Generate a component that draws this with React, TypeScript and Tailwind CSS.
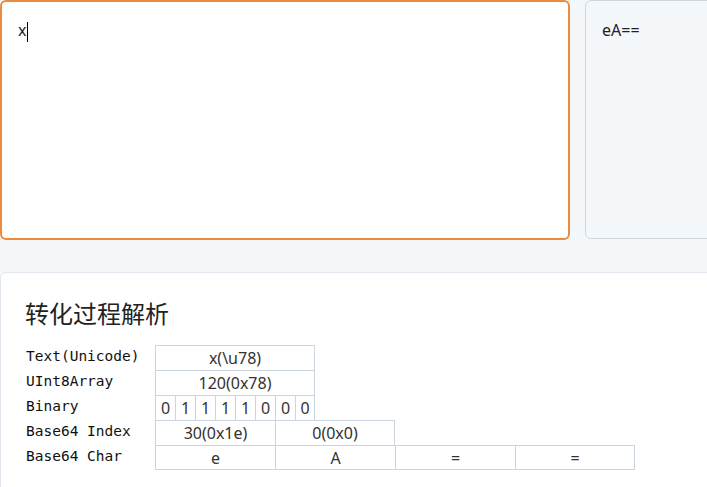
const rows: { label: string; cells: { text: string; w: number }[] }[] = [
  { label: "Text(Unicode)", cells: [{ text: "x(\\u78)", w: 160 }] },
  { label: "UInt8Array", cells: [{ text: "120(0x78)", w: 160 }] },
  {
    label: "Binary",
    cells: ["0", "1", "1", "1", "1", "0", "0", "0"].map((b) => ({ text: b, w: 20 })),
  },
  {
    label: "Base64 Index",
    cells: [
      { text: "30(0x1e)", w: 120 },
      { text: "0(0x0)", w: 120 },
    ],
  },
  {
    label: "Base64 Char",
    cells: [
      { text: "e", w: 120 },
      { text: "A", w: 120 },
      { text: "=", w: 120 },
      { text: "=", w: 120 },
    ],
  },
];

const sans = { fontFamily: '"Noto Sans", "Noto Sans CJK SC", sans-serif' };

const App = () => {
  return (
    <div className="h-[487px] w-[707px] overflow-hidden bg-[#f5f8fb]" style={sans}>
      <div className="flex h-[240px] gap-[15px]">
        <div className="h-[240px] w-[570px] shrink-0 rounded-md border-2 border-[#ee8a3b] bg-white px-4 pt-[18px] text-[16px] leading-5 text-[#1f2328]">
          <span>x</span>
          <span className="ml-px inline-block h-[20px] w-px bg-black align-middle" />
        </div>
        <div className="h-[239px] w-[570px] shrink-0 rounded-md border border-[#cfd7e1] bg-[#f5f8fb] px-4 pt-[19px] text-[16px] leading-5 text-[#1f2328]">
          eA==
        </div>
      </div>

      <div className="mt-[32px] w-[760px] rounded-md border border-[#e1e7ee] bg-white px-6 pt-6 pb-8">
        <h2
          className="text-[24px] leading-8 text-[#222]"
          style={{ fontFamily: '"Noto Sans CJK SC", sans-serif' }}
        >
          转化过程解析
        </h2>
        <div className="mt-4 flex flex-col">
          {rows.map((row, ri) => (
            <div key={row.label} className="flex h-[25px] items-stretch">
              <div
                className="w-[130px] shrink-0 pl-px text-[14.5px] leading-[23px] text-[#111]"
                style={{ fontFamily: '"DejaVu Sans Mono", monospace' }}
              >
                {row.label}
              </div>
              {row.cells.map((c, ci) => (
                <div
                  key={ci}
                  className={`flex shrink-0 items-center justify-center border-l border-t border-[#cbd5e1] text-[16px] text-[#333] ${
                    ci === row.cells.length - 1 ? "border-r" : ""
                  } ${ri === rows.length - 1 ? "border-b" : ""}`}
                  style={{ width: c.w }}
                >
                  {c.text}
                </div>
              ))}
            </div>
          ))}
        </div>
      </div>
    </div>
  );
};

export default App;
